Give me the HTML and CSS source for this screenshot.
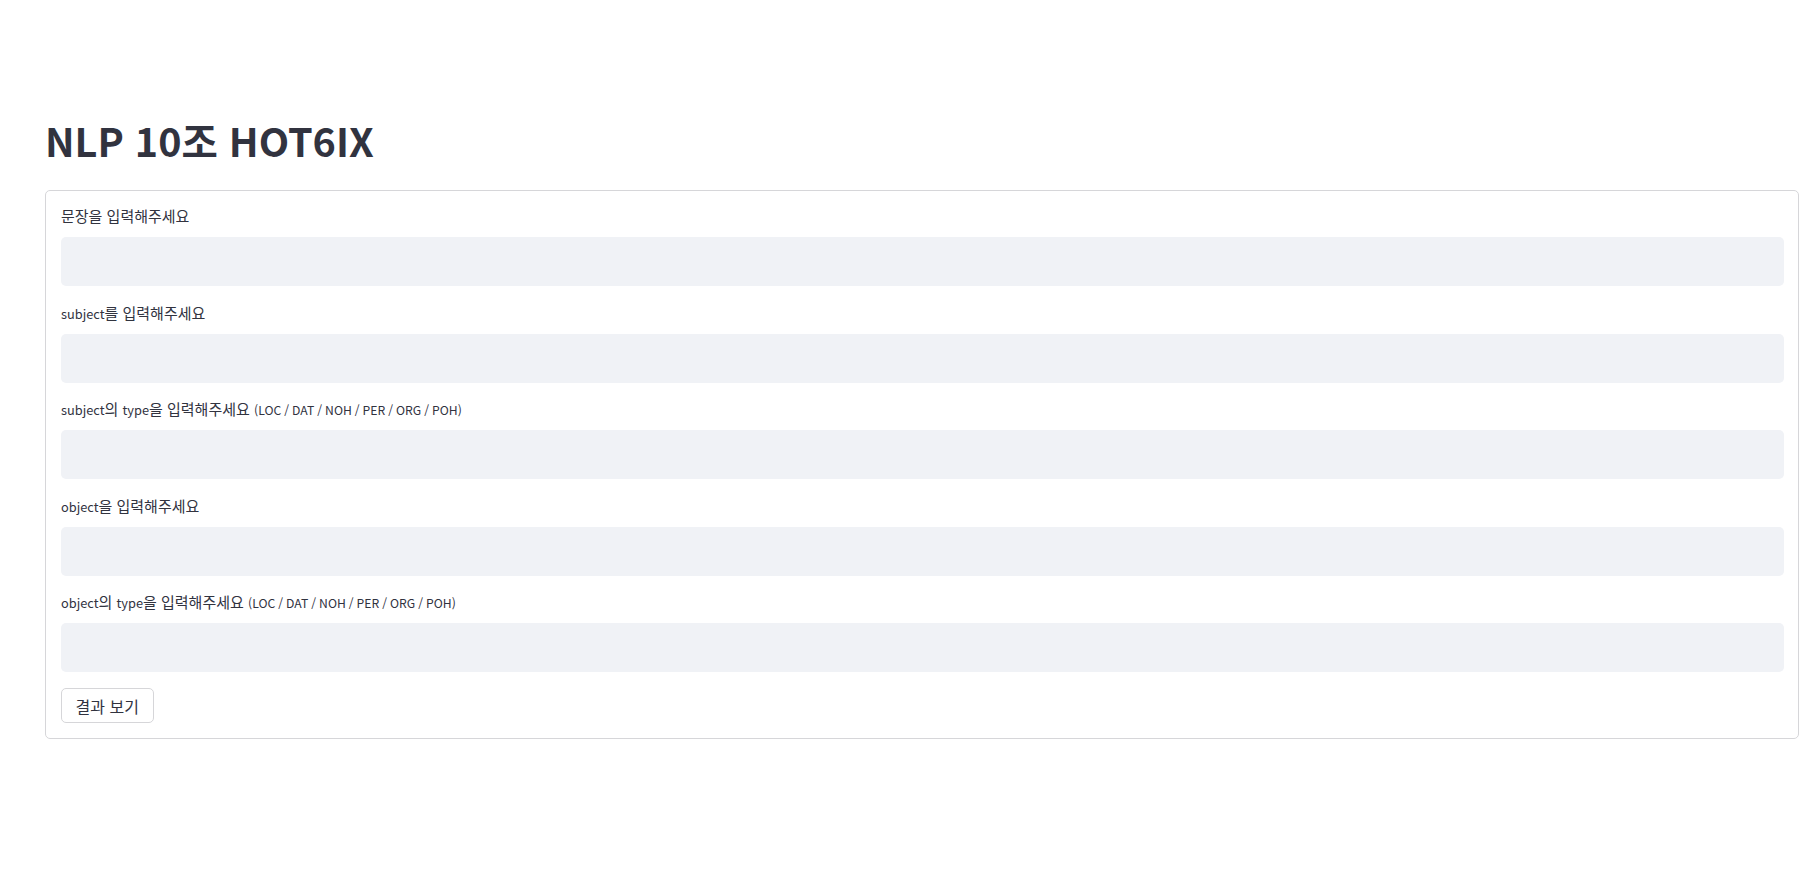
FILE: index.html
```html
<!DOCTYPE html>
<html lang="ko">
<head>
<meta charset="utf-8">
<title>NLP 10조 HOT6IX</title>
<link rel="stylesheet" href="styles.css">
</head>
<body>
<main class="page">
  <h1 class="title">NLP 10조 HOT6IX</h1>
  <form class="form">
    <div class="field">
      <label class="label">문장을 입력해주세요</label>
      <input class="input" type="text">
    </div>
    <div class="field">
      <label class="label"><span class="en">subject</span>를 입력해주세요</label>
      <input class="input" type="text">
    </div>
    <div class="field">
      <label class="label"><span class="en">subject</span>의 <span class="en">type</span>을 입력해주세요 <span class="en types">(LOC / DAT / NOH / PER / ORG / POH)</span></label>
      <input class="input" type="text">
    </div>
    <div class="field">
      <label class="label"><span class="en">object</span>을 입력해주세요</label>
      <input class="input" type="text">
    </div>
    <div class="field">
      <label class="label"><span class="en">object</span>의 <span class="en">type</span>을 입력해주세요 <span class="en types">(LOC / DAT / NOH / PER / ORG / POH)</span></label>
      <input class="input" type="text">
    </div>
    <div class="actions">
      <button class="button" type="button">결과 보기</button>
    </div>
  </form>
</main>
</body>
</html>
```

FILE: styles.css
```css
* {
  box-sizing: border-box;
}

html, body {
  margin: 0;
  padding: 0;
  background: #ffffff;
}

body {
  font-family: "Noto Sans CJK KR", "Noto Sans", sans-serif;
  color: #31333f;
}

.page {
  padding: 116px 6px 0 45px;
}

.title {
  margin: 0;
  font-size: 39.5px;
  line-height: 1.2;
  font-weight: 700;
  color: #31333f;
  letter-spacing: 0;
}

.form {
  margin-top: 27px;
  border: 1px solid #d6d6d9;
  border-radius: 5px;
  padding: 11px 14px 15px 15px;
  display: flex;
  flex-direction: column;
  gap: 12.4px;
}

.field {
  display: flex;
  flex-direction: column;
}

.label {
  height: 28px;
  line-height: 28px;
  font-size: 15px;
  color: #31333f;
  margin-bottom: 7px;
  white-space: nowrap;
}

.en {
  font-size: 12.8px;
}

.types {
  font-size: 12.2px;
  word-spacing: -0.4px;
}

.input {
  height: 49px;
  border: none;
  border-radius: 5px;
  background: #f0f2f6;
  outline: none;
  font: inherit;
  padding: 0 15px;
}

.actions {
  margin-top: 4px;
  display: flex;
}

.button {
  width: 92.5px;
  height: 35px;
  background: #ffffff;
  border: 1px solid #d6d6d9;
  border-radius: 5px;
  font-family: inherit;
  font-size: 16px;
  color: #31333f;
  padding: 0;
  cursor: pointer;
}
```
